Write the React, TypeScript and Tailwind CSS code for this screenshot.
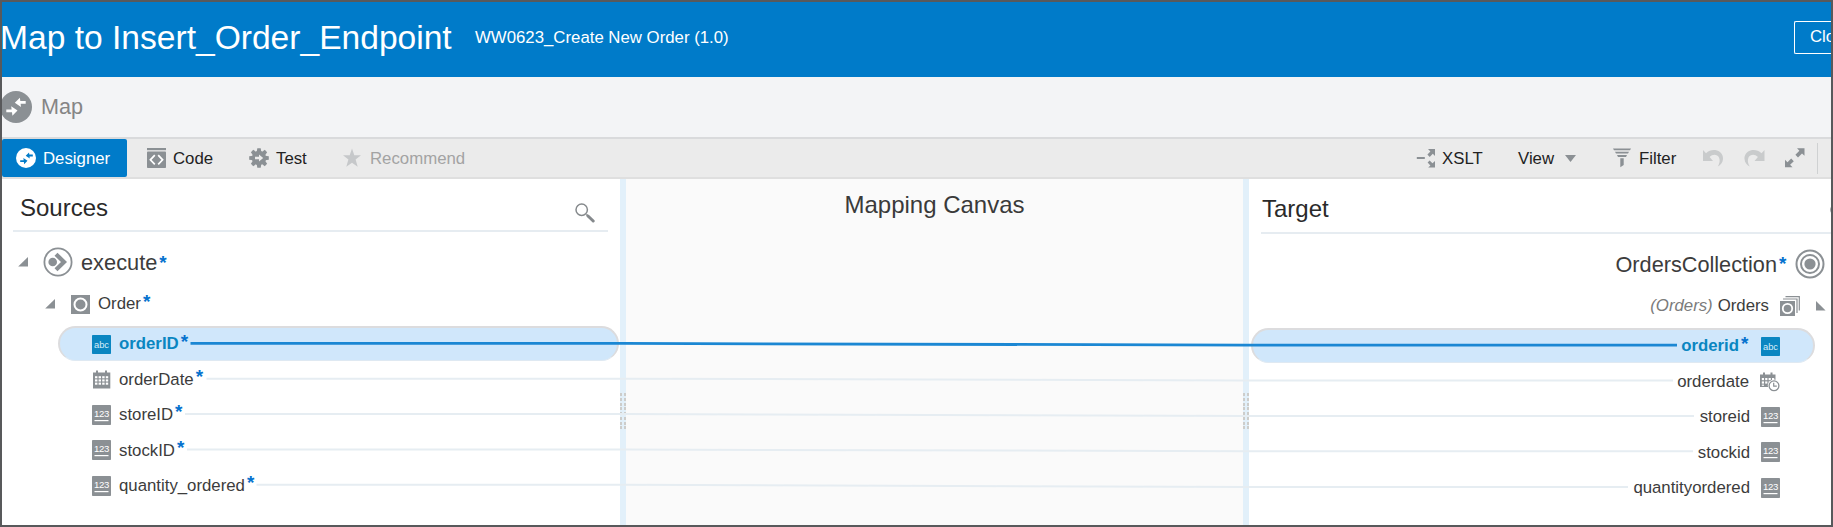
import React from "react";

const GRAY = "#8b9094";

function MapArrows({ className, color }: { className: string; color: string }) {
  return (
    <svg className={className} viewBox="0 0 20 20" fill={color}>
      <path d="M0.3 12.5H5.6L5.2 9.3L11.5 13.6L6.4 18.8L6 15.3H0.3Z" />
      <path d="M19.7 6.8H14.6L15 10L8.8 5.8L13.9 0.8L14.3 4H19.7Z" />
    </svg>
  );
}

function CodeIcon() {
  return (
    <svg className="h-5 w-[19px] shrink-0" viewBox="0 0 19 20">
      <rect width="19" height="2.2" fill={GRAY} />
      <rect y="3.6" width="19" height="16.4" rx="0.8" fill={GRAY} />
      <path d="M7.8 7.2L3.4 11.8L7.8 16.4M11.2 7.2L15.6 11.8L11.2 16.4" fill="none" stroke="#fff" strokeWidth="1.7" />
    </svg>
  );
}

function GearIcon() {
  return (
    <svg className="h-5 w-5 shrink-0" viewBox="0 0 20 20">
      <g fill={GRAY}>
        <circle cx="10" cy="10" r="7.2" />
        {[0, 45, 90, 135, 180, 225, 270, 315].map((a) => (
          <path key={a} d="M7.7 4L8.3 0.2H11.7L12.3 4Z" transform={`rotate(${a} 10 10)`} />
        ))}
      </g>
      <path d="M6 8.8H10V6.4L14.2 10L10 13.6V11.2H6Z" fill="#ebebeb" />
    </svg>
  );
}

function SearchIcon() {
  return (
    <svg className="h-5 w-5 shrink-0" viewBox="0 0 20 20" fill="none" stroke="#85898c">
      <circle cx="6.7" cy="6.7" r="5.7" strokeWidth="1.5" />
      <path d="M11.4 11.4L13 13" strokeWidth="1.6" />
      <path d="M13 13L18.2 18" strokeWidth="3" strokeLinecap="round" />
    </svg>
  );
}

function AbcIcon() {
  return (
    <svg className="h-[19px] w-[19px] shrink-0" viewBox="0 0 19 19">
      <rect width="19" height="19" rx="0.8" fill="#0a86c1" />
      <text x="9.5" y="13" textAnchor="middle" fontSize="9.4" fill="#d6ecf8" fontFamily="Liberation Sans, sans-serif">abc</text>
    </svg>
  );
}

function NumIcon() {
  return (
    <svg className="h-5 w-[19px] shrink-0" viewBox="0 0 19 20">
      <rect width="19" height="20" rx="0.8" fill={GRAY} />
      <text x="9.5" y="12.3" textAnchor="middle" fontSize="9.6" letterSpacing="-0.3" fill="#fff" fontFamily="Liberation Sans, sans-serif">123</text>
      <rect x="2.5" y="15" width="14" height="1.2" fill="#fff" />
    </svg>
  );
}

function CalendarIcon() {
  return (
    <svg className="h-[19px] w-[19px] shrink-0" viewBox="0 0 19 19">
      <path d="M1 2.5H4V0.5H6V2.5H13V0.5H15V2.5H18.3V18.5H1Z" fill={GRAY} />
      {[6.2, 9.4, 12.6].map((y) =>
        [3, 6.6, 10.2, 13.8].map((x) => <rect key={`${x}-${y}`} x={x} y={y} width="2.4" height="2.1" fill="#fff" />)
      )}
    </svg>
  );
}

function CalendarClockIcon() {
  return (
    <svg className="h-5 w-5 shrink-0" viewBox="0 0 20 20">
      <path d="M0 2.5H3V0.5H5V2.5H10.5V0.5H12.5V2.5H15.5V15H0Z" fill={GRAY} />
      {[6, 9.4].map((y) =>
        [1.8, 5.2, 8.6, 12].map((x) => <rect key={`${x}-${y}`} x={x} y={y} width="2.2" height="2.2" fill="#fff" />)
      )}
      <rect x="1.8" y="12.6" width="2.2" height="1.2" fill="#fff" />
      <circle cx="14" cy="13.8" r="6.2" fill="#fff" />
      <circle cx="14" cy="13.8" r="4.9" fill="#fff" stroke={GRAY} strokeWidth="1.3" />
      <path d="M13.7 10.8V14.2H16.8" fill="none" stroke={GRAY} strokeWidth="1.2" />
    </svg>
  );
}

function ExecuteIcon() {
  return (
    <svg className="h-[30px] w-[30px] shrink-0" viewBox="0 0 30 30">
      <circle cx="15" cy="15" r="13.6" fill="none" stroke={GRAY} strokeWidth="1.8" />
      <circle cx="9.7" cy="15" r="4.3" fill={GRAY} />
      <path d="M13 7.2L21 15L13 22.8" fill="none" stroke={GRAY} strokeWidth="4.2" />
    </svg>
  );
}

function TargetIcon() {
  return (
    <svg className="h-[30px] w-[30px] shrink-0" viewBox="0 0 30 30">
      <g fill="none" stroke={GRAY} strokeWidth="2">
        <circle cx="15" cy="15" r="13.5" />
        <circle cx="15" cy="15" r="9" />
      </g>
      <circle cx="15" cy="15" r="5.6" fill={GRAY} />
    </svg>
  );
}

function ElementIcon() {
  return (
    <svg className="h-[19px] w-[19px] shrink-0" viewBox="0 0 19 19">
      <rect width="19" height="19" fill={GRAY} />
      <circle cx="9.5" cy="9.5" r="6" fill={GRAY} stroke="#fff" strokeWidth="2" />
    </svg>
  );
}

function ElementStackIcon() {
  return (
    <svg className="h-5 w-5 shrink-0" viewBox="0 0 20 20">
      <path d="M5.5 0.7H19.3V14.5M3 3H17V17" fill="none" stroke={GRAY} strokeWidth="1.2" />
      <rect y="5" width="15" height="15" fill={GRAY} />
      <circle cx="7.5" cy="12.5" r="4.7" fill={GRAY} stroke="#fff" strokeWidth="1.8" />
    </svg>
  );
}

function Caret({ flip = false }: { flip?: boolean }) {
  return (
    <svg className="h-[10px] w-[10px] shrink-0" viewBox="0 0 10 10" fill={GRAY}>
      <path d={flip ? "M0 0V9.5H9.6Z" : "M10 0V9.5H0.2Z"} />
    </svg>
  );
}

function Star({ className = "" }: { className?: string }) {
  return <span className={`w-[8px] pb-[5px] text-[19px] font-bold leading-[20px] text-[#0572ce] ${className}`}>*</span>;
}

function Grip() {
  return (
    <div className="flex w-[6px] shrink-0 flex-col gap-[1.76px] bg-[#e2f0fa] pt-[214px]">
      {[0, 1, 2, 3, 4, 5, 6, 7].map((i) => (
        <div key={i} className="flex h-[3px] justify-between">
          <span className="w-[2px] bg-[#cdcdcb]" />
          <span className="w-[2px] bg-[#cdcdcb]" />
        </div>
      ))}
    </div>
  );
}

const sources = [
  { name: "orderDate", icon: <CalendarIcon /> },
  { name: "storeID", icon: <NumIcon /> },
  { name: "stockID", icon: <NumIcon /> },
  { name: "quantity_ordered", icon: <NumIcon /> },
];

const targets = [
  { name: "orderdate", icon: <CalendarClockIcon /> },
  { name: "storeid", icon: <NumIcon /> },
  { name: "stockid", icon: <NumIcon /> },
  { name: "quantityordered", icon: <NumIcon /> },
];

const links = [
  { x1: 206.5, y1: 378.7, x2: 1673, y2: 380.4 },
  { x1: 185, y1: 414, x2: 1694, y2: 416 },
  { x1: 187, y1: 449.5, x2: 1693, y2: 451.2 },
  { x1: 256.5, y1: 484.8, x2: 1628, y2: 487 },
];

function Links() {
  return (
    <svg className="pointer-events-none absolute left-0 top-0 h-[527px] w-[1833px]" viewBox="0 0 1833 527" fill="none">
      {links.map((l) => (
        <path key={l.x1} d={`M${l.x1} ${l.y1}H623L1246 ${l.y2}H${l.x2}`} stroke="#e6edf2" strokeWidth="2" />
      ))}
      <path d="M190.5 343.4H623L1246 345.1H1677" stroke="#1b87d3" strokeWidth="2.8" />
    </svg>
  );
}

export default function App() {
  return (
    <div className="relative flex h-[527px] w-[1833px] flex-col overflow-hidden border-2 border-[#58595b] bg-white font-['Liberation_Sans',Arial,sans-serif] text-[16.8px] text-[#3c3c3c] whitespace-nowrap">
      <header className="flex h-[75px] shrink-0 bg-[#007bc9] text-white">
        <h1 className="-ml-[2px] w-[473px] shrink-0 text-[33.6px] leading-[71px]">Map to Insert_Order_Endpoint</h1>
        <p className="ml-[2px] leading-[71px]">WW0623_Create New Order (1.0)</p>
        <div className="ml-auto mt-[19px] h-[33px] w-[37px] shrink-0 overflow-hidden rounded-l-[2px] border border-r-0 border-white pl-[15px] leading-[29px]">
          Close
        </div>
      </header>

      <div className="flex h-[60px] shrink-0 items-center bg-[#f3f4f6]">
        <span className="-ml-[2px] flex h-8 w-[32px] shrink-0 items-center justify-center rounded-full bg-[#8b9094]">
          <MapArrows className="h-5 w-5" color="#fff" />
        </span>
        <span className="ml-[9px] text-[21.6px] text-[#858585]">Map</span>
      </div>

      <nav className="flex h-[42px] shrink-0 border-y-2 border-t-[#d9dadc] border-b-[#dfdfdf] bg-[#ebebeb] leading-[37px] text-[#222]">
        <div className="flex w-[125px] shrink-0 items-center rounded-[2px] bg-[#007bc9] pl-[14px] text-white">
          <span className="mr-[7px] flex h-5 w-5 items-center justify-center rounded-full bg-white">
            <MapArrows className="h-[13px] w-[13px]" color="#007bc9" />
          </span>
          Designer
        </div>
        <div className="flex w-[122px] shrink-0 items-center gap-[7px] pl-[20px]"><CodeIcon />Code</div>
        <div className="flex w-[93px] shrink-0 items-center gap-[7px]"><GearIcon />Test</div>
        <div className="flex items-center gap-[8px] text-[#a3a3a3]">
          <svg className="h-5 w-5" viewBox="0 0 20 20" fill="#c6c8ca"><path d="M10 0.5L12.3 7.2H19L13.6 11.6L15.7 18.8L10 14.7L4.3 18.8L6.4 11.6L1 7.2H7.7Z" /></svg>
          Recommend
        </div>
        <div className="ml-auto flex w-[415px] shrink-0 items-center">
          <div className="flex w-[102px] items-center gap-[6px]">
            <svg className="h-5 w-5" viewBox="0 0 20 20" fill={GRAY}>
              <rect x="0.8" y="9" width="8" height="2" />
              <path d="M12 1H19V8L16.8 5.8L13.7 8.9L11.4 6.6L14.4 3.4Z" />
              <path d="M19 19.6H12.2L14.4 17.4L11.6 14.6L13.6 12.5L16.5 15.3L19 12.9Z" />
            </svg>
            XSLT
          </div>
          <div className="flex w-[95px] items-center gap-[11px]">
            View
            <svg className="h-[7px] w-[11px]" viewBox="0 0 11 7" fill={GRAY}><path d="M0 0H11L5.5 7Z" /></svg>
          </div>
          <div className="flex w-[90px] items-center gap-[8px]">
            <svg className="h-5 w-[18px]" viewBox="0 0 18 20" fill={GRAY}>
              <path d="M0 0.5H18L17 2.3H1ZM2 3.7H16L15 5.6H3ZM4 7H14L13 9H5ZM7.3 10.3H10.7V17L7.3 19.3Z" />
            </svg>
            Filter
          </div>
          <svg className="mr-[20px] h-5 w-[21px]" viewBox="0 0 21 20" fill="#c9cbcc">
            <path d="M0 2L3 5.2C6 2.6 10 1.3 14 2.5C18 3.8 20.3 7 20 11C19.8 14.5 17.6 17.2 14.8 18.4C16.6 15.8 17.3 12.4 16 9.6C14.4 6.4 10 5.6 6.6 9L10 13H0Z" />
          </svg>
          <svg className="mr-[20px] h-5 w-[21px]" viewBox="0 0 21 20" fill="#c9cbcc">
            <path transform="translate(20.5 0) scale(-1 1)" d="M0 2L3 5.2C6 2.6 10 1.3 14 2.5C18 3.8 20.3 7 20 11C19.8 14.5 17.6 17.2 14.8 18.4C16.6 15.8 17.3 12.4 16 9.6C14.4 6.4 10 5.6 6.6 9L10 13H0Z" />
          </svg>
          <svg className="h-5 w-5" viewBox="0 0 20 20" fill={GRAY}>
            <path d="M12 0.3H19.5V7.8L17 5.4L13 9.4L10.4 6.8L14.4 2.8Z" />
            <path d="M7.5 19.3H0V11.8L2.5 14.2L6.2 10.6L8.8 13.2L5.1 16.8Z" />
          </svg>
          <span className="ml-[12px] h-[31px] w-px bg-[#cfd1d2]" />
        </div>
      </nav>

      <main className="flex min-h-0 flex-1">
        <section className="flex w-[618px] shrink-0 flex-col">
          <div className="ml-[11px] mr-[12px] flex h-[53px] items-start justify-between border-b-2 border-[#e6ecf1] pl-[7px] pr-[13px]">
            <h2 className="text-[24px] leading-[57px] text-[#2a2a2a]">Sources</h2>
            <div className="pt-[24px]"><SearchIcon /></div>
          </div>
          <div className="mt-[12px] flex h-[36px] items-center pl-[16px]">
            <Caret />
            <span className="ml-[15px] flex"><ExecuteIcon /></span>
            <span className="ml-[8px] mt-[2px] text-[21.8px]">execute</span>
            <Star className="ml-[2px] mt-[6px]" />
          </div>
          <div className="mt-[5px] flex h-[38px] items-center pl-[43px]">
            <Caret />
            <span className="ml-[16px]"><ElementIcon /></span>
            <span className="ml-[8px]">Order</span>
            <Star className="ml-[2px]" />
          </div>
          <div className="ml-[56px] mr-px mt-[3px] flex h-[35px] items-center rounded-full border-2 border-b border-[#dcdcde] border-b-[#dfe9f2] bg-[#d0e7fb] pl-[32px]">
            <AbcIcon />
            <span className="ml-[8px] font-bold text-[#0a86c1]">orderID</span>
            <Star className="ml-[2px]" />
          </div>
          <div className="flex flex-col pt-px">
            {sources.map((s) => (
              <div key={s.name} className="flex h-[35.3px] shrink-0 items-center pl-[90px]">
                {s.icon}
                <span className="ml-[8px]">{s.name}</span>
                <Star className="ml-[2px]" />
              </div>
            ))}
          </div>
        </section>

        <Grip />
        <section className="w-[617px] shrink-0 bg-[#fafafa] text-center">
          <h2 className="text-[24px] leading-[52px] text-[#3a3a3a]">Mapping Canvas</h2>
        </section>
        <Grip />

        <section className="flex w-[582px] shrink-0 flex-col items-end overflow-hidden">
          <div className="flex h-[55px] w-[570px] shrink-0 justify-between overflow-hidden border-b-2 border-[#e6ecf1]">
            <h2 className="pl-px text-[24px] leading-[59px] text-[#2a2a2a]">Target</h2>
            <div className="-mr-[19px] pt-[24px]"><SearchIcon /></div>
          </div>
          <div className="mt-[10px] flex h-[40px] items-center pr-[6px]">
            <span className="mt-[2px] text-[21.7px]">OrdersCollection</span>
            <Star className="ml-[2px] mr-[8px] mt-[4px]" />
            <TargetIcon />
          </div>
          <div className="mt-[3px] flex h-[38px] items-center pr-[5px]">
            <span className="italic text-[#7b7b7b]">(Orders)</span>
            <span className="ml-[5px] mr-[11px]">Orders</span>
            <ElementStackIcon />
            <span className="ml-[16px]"><Caret flip /></span>
          </div>
          <div className="mr-[16px] mt-[3px] flex h-[35px] w-[564px] items-center justify-end rounded-full border-2 border-b border-[#dcdcde] border-b-[#dfe9f2] bg-[#d0e7fb] pr-[33px]">
            <span className="font-bold text-[#0a86c1]">orderid</span>
            <Star className="ml-[2px] mr-[12px]" />
            <AbcIcon />
          </div>
          <div className="flex flex-col items-end pt-px">
            {targets.map((t) => (
              <div key={t.name} className="flex h-[35.3px] shrink-0 items-center pr-[51px]">
                <span className="mr-[11px]">{t.name}</span>
                {t.icon}
              </div>
            ))}
          </div>
        </section>
      </main>
      <div className="absolute -left-[2px] -top-[2px]"><Links /></div>
    </div>
  );
}
